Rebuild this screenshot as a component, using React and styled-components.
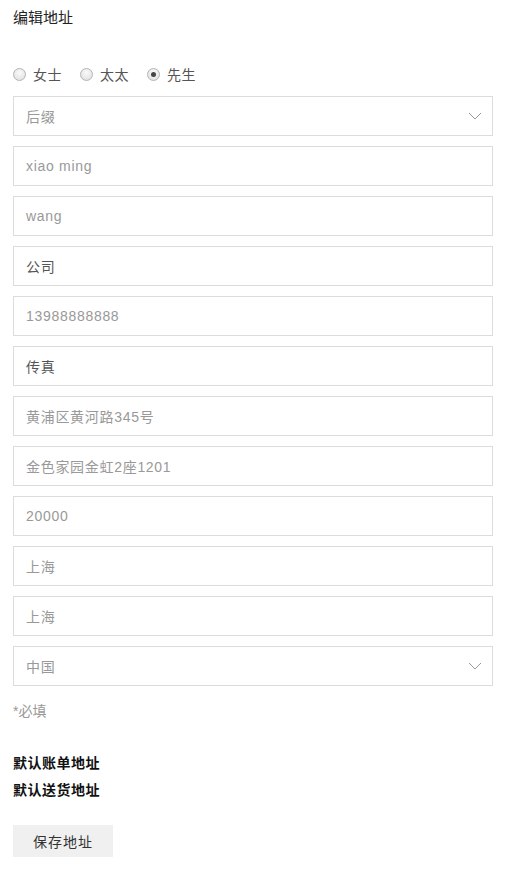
import React from 'react'
import styled, { createGlobalStyle } from 'styled-components'

const GlobalStyle = createGlobalStyle`
  body {
    margin: 0;
    background: #fff;
    font-family: "Liberation Sans", Arial, "Noto Sans CJK SC", sans-serif;
    color: #333;
  }
`

const Page = styled.div`
  padding: 8px 16px 0 13px;
  width: 480px;
`

const Title = styled.h2`
  margin: 0;
  font-size: 15px;
  line-height: 20px;
  font-weight: normal;
  color: #222;
`

const RadioRow = styled.div`
  display: flex;
  align-items: center;
  height: 20px;
  margin: 36px 0 12px;
`

const RadioLabel = styled.label`
  display: flex;
  align-items: center;
  font-size: 14px;
  letter-spacing: 0.5px;
  color: #555;
  margin-right: 18px;
`

const RadioDot = styled.span`
  width: 11px;
  height: 11px;
  border-radius: 50%;
  border: 1px solid #b4b4b4;
  background: radial-gradient(circle at 50% 35%, #fafafa 0%, #dcdcdc 100%);
  margin-right: 7px;
  display: flex;
  align-items: center;
  justify-content: center;
  &::after {
    content: '';
    width: 5px;
    height: 5px;
    border-radius: 50%;
    background: #444;
    display: ${p => (p.checked ? 'block' : 'none')};
  }
`

const Fields = styled.div`
  display: flex;
  flex-direction: column;
  gap: 10px;
`

const Field = styled.div`
  box-sizing: border-box;
  height: 40px;
  border: 1px solid #dcdcdc;
  display: flex;
  align-items: center;
  justify-content: space-between;
  padding: 0 10px 0 12px;
  font-size: 14px;
  letter-spacing: 0.7px;
  color: ${p => (p.filled ? '#555' : '#999')};
`

const Chevron = () => (
  <svg width="14" height="8" viewBox="0 0 14 8">
    <path d="M1 1 L7 7 L13 1" fill="none" stroke="#999" strokeWidth="1" />
  </svg>
)

const Required = styled.div`
  margin-top: 15px;
  font-size: 14px;
  line-height: 20px;
  color: #999;
`

const Defaults = styled.div`
  margin-top: 32px;
  display: flex;
  flex-direction: column;
  gap: 7px;
`

const DefaultItem = styled.div`
  font-size: 14px;
  line-height: 20px;
  font-weight: bold;
  letter-spacing: 0.5px;
  color: #111;
`

const SaveButton = styled.button`
  margin-top: 25px;
  width: 100px;
  height: 32px;
  border: none;
  background: #f0f0f0;
  font-family: inherit;
  font-size: 14px;
  letter-spacing: 1px;
  color: #333;
`

const fields = [
  { text: '后缀', select: true },
  { text: 'xiao ming' },
  { text: 'wang' },
  { text: '公司', filled: true },
  { text: '13988888888' },
  { text: '传真', filled: true },
  { text: '黄浦区黄河路345号' },
  { text: '金色家园金虹2座1201' },
  { text: '20000' },
  { text: '上海' },
  { text: '上海' },
  { text: '中国', select: true },
]

export default function App() {
  return (
    <Page>
      <GlobalStyle />
      <Title>编辑地址</Title>
      <RadioRow>
        <RadioLabel><RadioDot />女士</RadioLabel>
        <RadioLabel><RadioDot />太太</RadioLabel>
        <RadioLabel><RadioDot checked />先生</RadioLabel>
      </RadioRow>
      <Fields>
        {fields.map((f, i) => (
          <Field key={i} filled={f.filled}>
            <span>{f.text}</span>
            {f.select && <Chevron />}
          </Field>
        ))}
      </Fields>
      <Required>*必填</Required>
      <Defaults>
        <DefaultItem>默认账单地址</DefaultItem>
        <DefaultItem>默认送货地址</DefaultItem>
      </Defaults>
      <SaveButton>保存地址</SaveButton>
    </Page>
  )
}
